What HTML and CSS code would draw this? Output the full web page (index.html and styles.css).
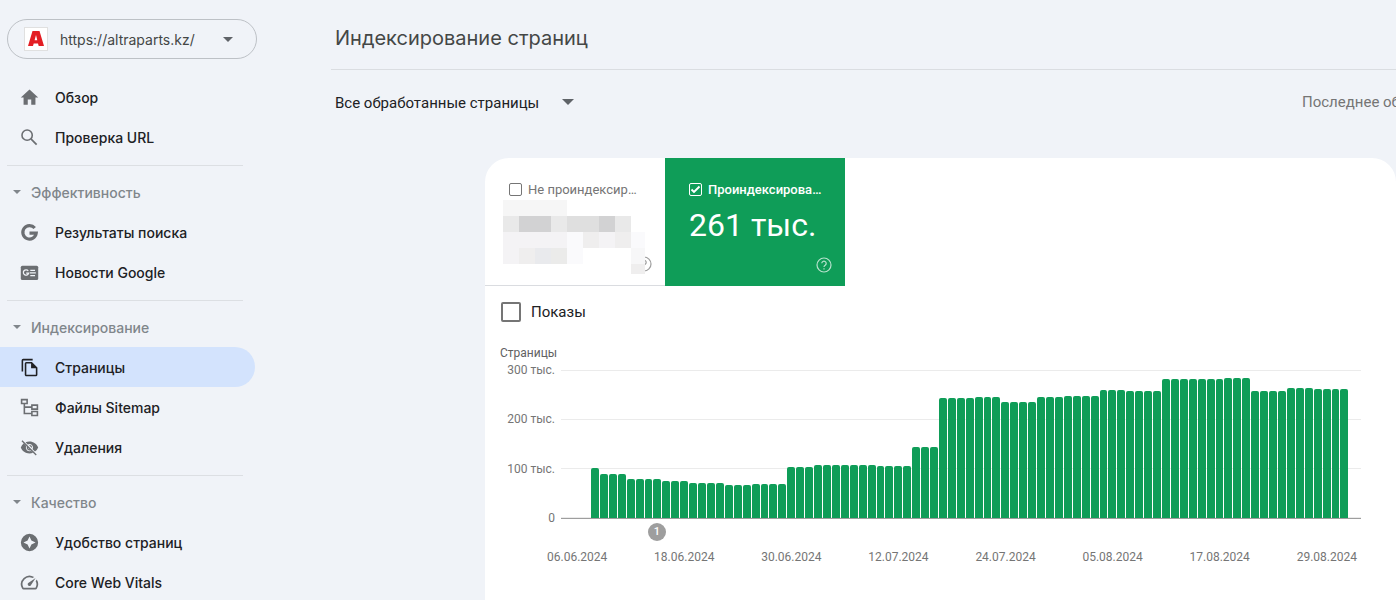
FILE: index.html
```html
<!DOCTYPE html>
<html lang="ru">
<head>
<meta charset="utf-8">
<meta name="viewport" content="width=device-width, initial-scale=1">
<title>Индексирование страниц</title>
<link rel="stylesheet" href="styles.css">
</head>
<body>
<div class="shell">
  <aside class="sidebar">
    <div class="property">
      <svg class="property-logo" viewBox="0 0 24 24" aria-hidden="true"><rect x=".5" y=".5" width="23" height="23" fill="#fff" stroke="#e0e0e0"/><path fill="#e31e24" fill-rule="evenodd" d="M8.500 4h7L20 19h-5.300l-.7-2.600H9.700L9 19H4zM12 8l-1.400 5.200h2.700z"/></svg>
      <select class="property-select" aria-label="Ресурс"><option>https://altraparts.kz/</option></select>
      <svg class="caret" viewBox="0 0 10 5" aria-hidden="true"><path d="M0 0h10L5 5z"/></svg>
    </div>
    <nav class="nav">
      <a class="item" href="#"><svg class="icon" viewBox="0 0 24 24"><path d="M9.800 21v-6.500h4.400V21h5.300v-9H23L12 2 1 12h3.500v9z"/></svg>Обзор</a>
      <a class="item" href="#"><svg class="icon" viewBox="0 0 24 24"><circle cx="9" cy="9" r="6.500" fill="none" stroke="currentColor" stroke-width="2"/><path fill="none" stroke="currentColor" stroke-width="2.200" d="M13.800 13.800l7.200 7.200"/></svg>Проверка URL</a>
      <hr class="rule">
      <button class="group" type="button"><svg class="small-caret" viewBox="0 0 8 4"><path d="M0 0h8L4 4z"/></svg>Эффективность</button>
      <a class="item" href="#"><svg class="icon" viewBox="0 0 24 24"><path fill="none" stroke="currentColor" stroke-width="4" d="M18.600 6.400A8.500 8.500 0 1 0 20.500 12.800H12"/></svg>Результаты поиска</a>
      <a class="item" href="#"><svg class="icon" viewBox="0 0 24 24"><rect x="1" y="3.500" width="22" height="18" rx="2"/><path fill="none" stroke="#f0f3f8" stroke-width="1.600" d="M10.400 9.900A3.400 3.400 0 1 0 11 12.700H7.800M13 9.200h6M12.500 12.500H20M13 15.800h6"/></svg>Новости Google</a>
      <hr class="rule">
      <button class="group" type="button"><svg class="small-caret" viewBox="0 0 8 4"><path d="M0 0h8L4 4z"/></svg>Индексирование</button>
      <a class="item active" href="#" aria-current="page"><svg class="icon" viewBox="1 0 22 24"><path d="M16 1H4a2 2 0 0 0-2 2v14h2V3h12zM15 5H8a2 2 0 0 0-2 2v14c0 1.100.9 2 2 2h12a2 2 0 0 0 2-2V12zM8 21V7h6v6h6v8z"/></svg>Страницы</a>
      <a class="item" href="#"><svg class="icon" viewBox="0 0 24 24"><path fill="none" stroke="currentColor" stroke-width="2" d="M2 2h7v5H2zM15 9h7v5h-7zM15 17h7v5h-7zM5.500 7v12.500H15M5.500 11.500H15"/></svg>Файлы Sitemap</a>
      <a class="item" href="#"><svg class="icon" viewBox="0 0 24 24"><path d="M12 4.500c5 0 9.270 3.110 11 7.500a11.800 11.800 0 0 1-4.100 5.200l-3-3A4.500 4.500 0 0 0 9.800 8.100L7 5.500a12 12 0 0 1 5-1zM4.800 6.700A11.800 11.800 0 0 0 1 12c1.730 4.390 6 7.500 11 7.500 1.600 0 3.100-.3 4.500-.9l-2.500-2.500A4.500 4.500 0 0 1 7.900 10zM12 9a3 3 0 0 1 3 3.500L11.500 9z"/><path fill="none" stroke="currentColor" stroke-width="1.600" d="M2.500 3.500l18 18M9.500 11a3 3 0 0 0 3.500 4"/></svg>Удаления</a>
      <hr class="rule">
      <button class="group" type="button"><svg class="small-caret" viewBox="0 0 8 4"><path d="M0 0h8L4 4z"/></svg>Качество</button>
      <a class="item" href="#"><svg class="icon" viewBox="1 1 22 22"><path fill-rule="evenodd" d="M12 2a10 10 0 1 0 0 20 10 10 0 0 0 0-20zM12 5l2.200 4.800L19 12l-4.800 2.200L12 19l-2.200-4.800L5 12l4.800-2.200z"/></svg>Удобство страниц</a>
      <a class="item" href="#"><svg class="icon" viewBox="1 1 22 22"><path d="M20.380 8.570l-1.230 1.850a8 8 0 0 1-.22 7.580H5.070A8 8 0 0 1 15.580 6.850l1.850-1.230A10 10 0 0 0 3.350 19a2 2 0 0 0 1.720 1h13.850a2 2 0 0 0 1.740-1 10 10 0 0 0-.27-10.440zM10.590 15.410a2 2 0 0 0 2.830 0l5.660-8.490-8.490 5.660a2 2 0 0 0 0 2.830z"/></svg>Core Web Vitals</a>
    </nav>
  </aside>
  <main class="main">
    <h1 class="title">Индексирование страниц</h1>
    <div class="toolbar">
      <div class="filter">
        <select class="filter-select" aria-label="Фильтр страниц"><option>Все обработанные страницы</option></select>
        <svg class="filter-caret" viewBox="0 0 12 6" aria-hidden="true"><path d="M0 0h12L6 6z"/></svg>
      </div>
      <p class="updated">Последнее обновление</p>
    </div>
    <section class="card">
      <div class="tabs">
        <div class="tab">
          <label class="tab-label"><input class="check" type="checkbox"><span class="clip">Не проиндексированные</span></label>
          <svg class="help" viewBox="0 0 16 16" aria-hidden="true"><circle cx="8" cy="8" r="7"/><path d="M5.800 6.300a2.200 2.200 0 1 1 3.400 1.900C8.400 8.700 8 9 8 10M8 11.200v1.300"/></svg>
          <svg class="mosaic" viewBox="0 0 142 74" shape-rendering="crispEdges" aria-hidden="true">
            <path fill="#f6f6f6" d="M0 0h64v16H0z"/>
            <path fill="#e9e9e9" d="M0 16h16v16H0zM48 16h16v16H48zM112 16h16v16h-16z"/>
            <path fill="#d2d2d3" d="M16 16h32v16H16zM96 16h16v16H96z"/>
            <path fill="#dfdfdf" d="M64 16h32v16H64z"/>
            <path fill="#f4f3f5" d="M0 32h64v16H0zM96 32h16v16H96zM0 48h16v16H0z"/>
            <path fill="#fafafc" d="M64 32h16v16H64zM64 48h16v16H64zM128 32h14v16h-14z"/>
            <path fill="#efeeee" d="M80 32h16v16H80zM112 32h16v16h-16zM16 48h16v16H16zM128 64h14v10h-14z"/>
            <path fill="#e9eaed" d="M32 48h16v16H32z"/><path fill="#ebebea" d="M48 48h16v16H48z"/>
            <path fill="#f7f7f8" d="M128 48h14v16h-14z"/>
          </svg>
        </div>
        <div class="tab selected">
          <label class="tab-label"><input class="check" type="checkbox" checked><span class="clip">Проиндексированные</span></label>
          <strong class="total">261 тыс.</strong>
          <svg class="help" viewBox="0 0 16 16" aria-hidden="true"><circle cx="8" cy="8" r="7"/><path d="M5.800 6.300a2.200 2.200 0 1 1 3.400 1.900C8.400 8.700 8 9 8 10M8 11.200v1.300"/></svg>
        </div>
      </div>
      <label class="shows"><input class="check big" type="checkbox">Показы</label>
      <div class="chart">
        <p class="chart-title">Страницы</p>
        <div class="plot-row">
          <div class="y-axis"><span>300 тыс.</span><span>200 тыс.</span><span>100 тыс.</span><span>0</span></div>
          <div class="plot" id="plot"></div>
        </div>
        <div class="events"><span class="event">1</span></div>
        <div class="x-axis"><span>06.06.2024</span><span>18.06.2024</span><span>30.06.2024</span><span>12.07.2024</span><span>24.07.2024</span><span>05.08.2024</span><span>17.08.2024</span><span>29.08.2024</span></div>
      </div>
    </section>
  </main>
</div>
<script src="chart.js"></script>
</body>
</html>
```
FILE: styles.css
```css
* { box-sizing: border-box; }
body { margin: 0; background: #f0f3f8; color: #202124; font-family: Roboto, "Liberation Sans", sans-serif; }
p, h1 { margin: 0; font-weight: 400; }
svg { fill: currentColor; flex: none; }
button, select, input { font: inherit; color: inherit; margin: 0; }

.shell { display: flex; height: 100vh; overflow: hidden; }

.sidebar { flex: none; width: 331px; padding-top: 19px; font-family: Inter, Roboto, sans-serif; font-size: 14px; }
.property { display: grid; grid-template-columns: 24px 1fr 10px; align-items: center; width: 250px; height: 40px; margin-left: 7px; padding: 0 23px 0 16px; border: 1px solid #bdc1c6; border-radius: 20px; color: #5f6368; }
.property-logo { width: 24px; height: 24px; grid-area: 1 / 1; }
.property-select { grid-area: 1 / 2 / 2 / 4; height: 38px; padding: 0 0 0 12px; border: 0; background: none; appearance: none; color: #444746; }
.caret { grid-area: 1 / 3; width: 10px; height: 5px; pointer-events: none; }

.nav { margin-top: 18px; }
.item { display: flex; align-items: center; gap: 16px; width: 255px; height: 40px; padding-left: 20px; border-radius: 0 20px 20px 0; color: #202124; font-weight: 500; text-decoration: none; }
.icon { width: 19px; height: 19px; color: #6b6e72; }
.active { background: #d3e3fd; }
.active .icon { color: #202124; }
.rule { width: 236px; height: 1px; margin: 8px 0 6px 7px; border: 0; background: #dcdfe3; }
.group { display: flex; align-items: center; gap: 10px; height: 40px; padding: 0 0 0 13px; border: 0; background: none; color: #80868b; font-weight: 500; }
.small-caret { width: 8px; height: 4px; }

.main { flex: 1; min-width: 0; }
.title { height: 70px; padding: 25px 4px 0; border-bottom: 1px solid #dadde1; color: #444746; font-family: Inter, Roboto, sans-serif; font-size: 20px; line-height: 26px; }
.toolbar { display: flex; justify-content: space-between; align-items: center; height: 64px; padding-left: 4px; font-size: 15px; }
.filter { display: grid; grid-template-columns: 1fr 12px; align-items: center; width: 239px; }
.filter-select { grid-area: 1 / 1 / 2 / 3; height: 32px; padding: 2px 0 0; border: 0; background: none; appearance: none; }
.filter-caret { grid-area: 1 / 2; width: 12px; height: 6px; color: #5f6368; pointer-events: none; }
.updated { width: 94px; overflow: hidden; white-space: nowrap; color: #757575; }

.card { margin: 24px 0 0 154px; height: 100%; border-radius: 24px; background: #fff; }
.tabs { display: flex; }
.tab { position: relative; display: flex; flex-direction: column; width: 180px; height: 128px; padding: 23px 22px 24px 24px; border-bottom: 1px solid #dadce0; color: #757575; }
.tab-label { display: flex; align-items: center; gap: 6px; height: 17px; font-size: 13px; }
.clip { overflow: hidden; text-overflow: ellipsis; white-space: nowrap; }
.selected { border: 0; background: #0f9d58; color: #fff; }
.selected .tab-label { font-weight: 500; }
.total { margin-top: 9px; font-size: 32px; font-weight: 400; line-height: 36px; white-space: nowrap; }
.help { position: absolute; right: 13px; bottom: 13px; width: 16px; height: 16px; fill: none; stroke: currentColor; stroke-width: 1.2; opacity: .7; }
.mosaic { position: absolute; left: 18px; top: 42px; width: 142px; height: 74px; }

.check { flex: none; width: 13px; height: 13px; border: 1px solid currentColor; border-radius: 2px; appearance: none; }
.check:checked { background: no-repeat center / 11px url("data:image/svg+xml,%3Csvg xmlns='http://www.w3.org/2000/svg' viewBox='0 0 11 11'%3E%3Cpath d='M1.500 5.500l2.500 2.500L9.500 2.500' fill='none' stroke='white' stroke-width='1.900'/%3E%3C/svg%3E"); }
.big { width: 20px; height: 20px; border: 2px solid #757575; }
.shows { display: flex; align-items: center; gap: 10px; width: max-content; height: 20px; margin: 16px 0 0 16px; font-size: 15px; }

.chart { padding: 23px 35px 0 15px; color: #757575; font-size: 12px; line-height: 16px; }
.chart-title { color: #616161; }
.plot-row { display: flex; gap: 6px; height: 164px; margin-top: 1px; }
.y-axis { display: flex; flex-direction: column; justify-content: space-between; width: 55px; height: 164px; text-align: right; }
.plot { display: flex; align-items: flex-end; gap: 1px; flex: 1; min-width: 0; height: 149px; margin-top: 8px; padding: 0 12px 0 30px; border-bottom: 1px solid #9e9e9e; background: linear-gradient(#ebebeb 1px, transparent 1px) 0 0 / 100% 49px; }
.bar { flex: 1; min-width: 0; border-radius: 2px 2px 0 0; background: #0f9d58; }
.events { height: 18px; margin-top: -3px; padding-left: 148px; }
.event { display: block; width: 18px; height: 18px; border-radius: 50%; background: #9e9e9e; color: #fff; font-size: 11px; font-weight: 500; line-height: 18px; text-align: center; }
.x-axis { display: flex; justify-content: space-between; margin: 8px 4px 0 47px; }
```
FILE: chart.js
```js
// Indexed pages per day in thousands, as [number of days, value].
const runs = [
  [1, 101], [3, 89], [4, 79], [3, 75], [4, 71], [3, 67], [4, 69], [3, 103],
  [7, 107], [4, 105], [3, 144], [4, 243], [3, 245], [4, 235], [3, 245],
  [4, 247], [3, 259], [4, 257], [7, 281], [3, 284], [4, 257], [3, 263], [4, 261]
];
const plot = document.getElementById("plot");
for (const [days, value] of runs) {
  for (let i = 0; i < days; i++) {
    const bar = document.createElement("div");
    bar.className = "bar";
    bar.style.height = Math.round(value * 148 / 300) + "px";
    plot.append(bar);
  }
}
```
